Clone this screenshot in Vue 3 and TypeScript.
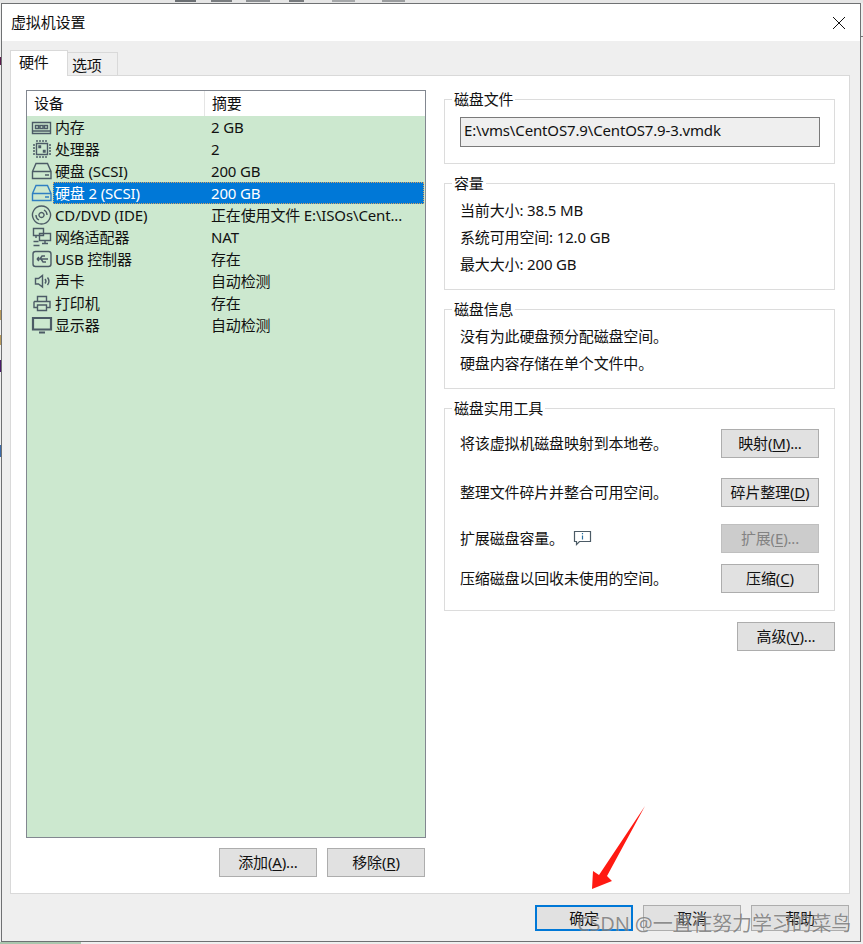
<script setup lang="ts">
interface Device {
  name: string
  summary: string
  icon: string
  fill?: string
  selected?: boolean
}

const devices: Device[] = [
  { name: '内存', summary: '2 GB', icon: 'M1.5 6.5H19.5V17.5H1.5ZM4.5 9.5H7.5V12.5H4.5ZM9 9.5H12V12.5H9ZM13.5 9.5H16.5V12.5H13.5ZM1.5 15H19.5' },
  { name: '处理器', summary: '2', icon: 'M5.5 5.5H16.5V16.5H5.5ZM6 2V4M9 2V4M12 2V4M15 2V4M6 18V20M9 18V20M12 18V20M15 18V20M2 7H4M2 10H4M2 13H4M2 16H4M18 7H20M18 10H20M18 13H20M18 16H20M8 8H9.5V9.5H8ZM12.5 12.5H14V14H12.5Z' },
  { name: '硬盘 (SCSI)', summary: '200 GB', icon: 'M1.5 11.5L5 3.5H16.5L20 11.5V18.5H1.5ZM2 11.5H19.5M14 15H18' },
  { name: '硬盘 2 (SCSI)', summary: '200 GB', icon: 'M1.5 11.5L5 3.5H16.5L20 11.5V18.5H1.5ZM2 11.5H19.5M14 15H18', selected: true },
  { name: 'CD/DVD (IDE)', summary: '正在使用文件 E:\\ISOs\\Cent...', icon: 'M10.5 2a9 9 0 1 0 .01 0ZM10.5 8.5a2.5 2.5 0 1 0 .01 0ZM5 11a5.5 5.5 0 0 0 3 5M16 11a5.5 5.5 0 0 0-3-5' },
  { name: '网络适配器', summary: 'NAT', icon: 'M2.5 2.5H12.5V9.5H2.5ZM8.5 7.5H19.5V14.5H8.5ZM14 14.5V17M11 17.5H17M5 10V12M2.5 15.5H7.5M2.5 19.5H8.5' },
  { name: 'USB 控制器', summary: '存在', icon: 'M4.5 3.5H17.5A2.5 2.5 0 0 1 20 6V16A2.5 2.5 0 0 1 17.5 18.5H4.5A2.5 2.5 0 0 1 2 16V6A2.5 2.5 0 0 1 4.5 3.5ZM6 11H17M6 11L8 9M6 11L8 13M9 11L11 8H14M10 11L12 14H15' },
  { name: '声卡', summary: '自动检测', icon: 'M4.5 8.5H7.5L11.5 5.5V17L7.5 14H4.5ZM14 9a3.5 3.5 0 0 1 0 4.5M16.5 7.5a6 6 0 0 1 0 7.5' },
  { name: '打印机', summary: '存在', icon: 'M6.5 9V4.5H15.5V9M3 9.5H19V15.5H15.5M6.5 15.5H3V9.5M6.5 13H15.5V18.5H6.5Z' },
  { name: '显示器', summary: '自动检测', icon: 'M2 4H20V15.5H2ZM8 18.5H14', fill: 'wide' }
]

interface Fragment {
  x: number
  y: number
  w: number
  h: number
  c: string
}

const fragments: Fragment[] = [
  { x: 0, y: 0, w: 863, h: 3, c: '#e6e6e6' },
  { x: 175, y: 0, w: 21, h: 2, c: '#6b6f73' },
  { x: 211, y: 0, w: 21, h: 2, c: '#7a7d80' },
  { x: 246, y: 0, w: 24, h: 2, c: '#8c8f92' },
  { x: 289, y: 0, w: 15, h: 2, c: '#777a7d' },
  { x: 332, y: 0, w: 23, h: 2, c: '#a5a7a9' },
  { x: 382, y: 0, w: 23, h: 2, c: '#9a9c9e' },
  { x: 0, y: 57, w: 1, h: 8, c: '#5d1b4e' },
  { x: 0, y: 310, w: 1, h: 10, c: '#b99a5a' },
  { x: 0, y: 335, w: 1, h: 10, c: '#b99a5a' },
  { x: 0, y: 360, w: 1, h: 12, c: '#4a1a6a' },
  { x: 0, y: 445, w: 1, h: 12, c: '#3b6aa8' },
  { x: 0, y: 942, w: 81, h: 2, c: '#a9c6ad' },
  { x: 861, y: 36, w: 2, h: 1, c: '#777777' }
]
</script>

<template>
  <div class="page">
    <i
      v-for="(f, i) in fragments"
      :key="i"
      class="fragment"
      :style="{ left: f.x + 'px', top: f.y + 'px', width: f.w + 'px', height: f.h + 'px', background: f.c }"
    ></i>

    <div class="window">
      <header class="titlebar">
        <span>虚拟机设置</span>
        <svg class="close" width="12" height="12" viewBox="0 0 12 12">
          <path d="M0 0L12 12M12 0L0 12" stroke="#111" stroke-width="1" fill="none" />
        </svg>
      </header>

      <div class="body">
        <nav class="tabs">
          <div class="tab active">硬件</div>
          <div class="tab">选项</div>
        </nav>

        <main class="panel">
          <section class="left">
            <div class="list">
              <div class="list-head">
                <div class="col-a">设备</div>
                <div class="col-b">摘要</div>
              </div>
              <div v-for="d in devices" :key="d.name" class="row" :class="{ selected: d.selected }">
                <svg class="dev-icon" width="22" height="22" viewBox="0 0 22 22">
                  <path
                    :d="d.icon"
                    fill="none"
                    :stroke="d.selected ? '#2f7fc2' : '#4c5b66'"
                    :stroke-width="d.fill ? 2.2 : 1.4"
                  />
                </svg>
                <div class="row-text">
                  <span class="row-name">{{ d.name }}</span>
                  <span class="row-summary">{{ d.summary }}</span>
                </div>
              </div>
            </div>
            <div class="list-actions">
              <button class="btn">添加(<u>A</u>)...</button>
              <button class="btn">移除(<u>R</u>)</button>
            </div>
          </section>

          <section class="right">
            <fieldset class="group g1">
              <legend>磁盘文件</legend>
              <div class="filebox">E:\vms\CentOS7.9\CentOS7.9-3.vmdk</div>
            </fieldset>

            <fieldset class="group g2">
              <legend>容量</legend>
              <p>当前大小: 38.5 MB</p>
              <p>系统可用空间: 12.0 GB</p>
              <p>最大大小: 200 GB</p>
            </fieldset>

            <fieldset class="group g3">
              <legend>磁盘信息</legend>
              <p>没有为此硬盘预分配磁盘空间。</p>
              <p>硬盘内容存储在单个文件中。</p>
            </fieldset>

            <fieldset class="group g4">
              <legend>磁盘实用工具</legend>
              <div class="tool">
                <span class="tool-label">将该虚拟机磁盘映射到本地卷。</span>
                <button class="btn">映射(<u>M</u>)...</button>
              </div>
              <div class="tool">
                <span class="tool-label">整理文件碎片并整合可用空间。</span>
                <button class="btn">碎片整理(<u>D</u>)</button>
              </div>
              <div class="tool">
                <span class="tool-label with-info">
                  扩展磁盘容量。
                  <svg class="info" width="19" height="16" viewBox="0 0 19 16">
                    <path d="M1.5 1.5H17.5V11.5H6.5L3.5 14.5V11.5H1.5Z" fill="none" stroke="#4c5b66" stroke-width="1.2" />
                    <path d="M9.5 3V4.2M9.5 5.5V9.5" fill="none" stroke="#2a6f9e" stroke-width="1.2" />
                  </svg>
                </span>
                <button class="btn" disabled>扩展(<u>E</u>)...</button>
              </div>
              <div class="tool">
                <span class="tool-label">压缩磁盘以回收未使用的空间。</span>
                <button class="btn">压缩(<u>C</u>)</button>
              </div>
            </fieldset>

            <div class="advanced">
              <button class="btn">高级(<u>V</u>)...</button>
            </div>
          </section>
        </main>

        <footer class="footer">
          <button class="btn foot default">确定</button>
          <button class="btn foot">取消</button>
          <button class="btn foot">帮助</button>
        </footer>
      </div>

      <svg class="arrow" width="60" height="88" viewBox="0 0 60 88">
        <path d="M54 1L16 71L21 76L1 84L2 66L8 70Z" fill="#ff1a12" />
      </svg>
      <div class="watermark">CSDN @一直在努力学习的菜鸟</div>
    </div>
  </div>
</template>

<style>
html,
body {
  margin: 0;
  background: #efefef;
}
</style>

<style scoped>
.page {
  position: relative;
  width: 863px;
  height: 944px;
  overflow: hidden;
  padding: 3px 0 0 1px;
  box-sizing: border-box;
  font-family: "Noto Sans", "Noto Sans CJK SC", sans-serif;
  font-size: 15px;
  letter-spacing: -0.15px;
  color: #111;
}
.fragment {
  position: absolute;
  display: block;
}
.window {
  position: relative;
  width: 860px;
  height: 939px;
  box-sizing: border-box;
  border: 1px solid #6f7173;
  background: #efefef;
  display: flex;
  flex-direction: column;
}
.titlebar {
  height: 37px;
  flex: none;
  background: #fff;
  display: flex;
  align-items: center;
  justify-content: space-between;
  padding: 0 15px 2px 9px;
  box-sizing: border-box;
}
.close {
  display: block;
  margin-top: 2px;
}
.body {
  flex: 1;
  padding: 9px 10px 0 8px;
  display: flex;
  flex-direction: column;
}
.tabs {
  display: flex;
  align-items: flex-end;
  height: 25px;
  position: relative;
  z-index: 1;
}
.tab {
  width: 50px;
  height: 23px;
  box-sizing: border-box;
  border: 1px solid #d9d9d9;
  border-bottom: none;
  border-left: none;
  padding-left: 4px;
  line-height: 24px;
  background: #efefef;
}
.tab.active {
  width: 58px;
  height: 26px;
  margin-bottom: -1px;
  background: #fff;
  border-left: 1px solid #d9d9d9;
  padding-left: 8px;
  line-height: 22px;
}
.panel {
  height: 819px;
  box-sizing: border-box;
  background: #fff;
  border: 1px solid #d9d9d9;
  padding: 13px 13px 0 15px;
  display: flex;
  gap: 18px;
}
.left {
  width: 400px;
  flex: none;
}
.list {
  margin-top: 1px;
  height: 748px;
  box-sizing: border-box;
  border: 1px solid #828790;
  background: #cce8cf;
}
.list-head {
  height: 25px;
  display: flex;
  background: #fff;
  line-height: 25px;
}
.col-a {
  width: 170px;
  padding-left: 7px;
  border-right: 1px solid #e5e5e5;
}
.col-b {
  padding-left: 7px;
}
.row {
  height: 22px;
  display: flex;
  padding-left: 4px;
  padding-right: 1px;
}
.dev-icon {
  flex: none;
  display: block;
}
.row-text {
  flex: 1;
  display: flex;
  line-height: 22px;
  padding-left: 2px;
  box-sizing: border-box;
}
.row-name {
  width: 156px;
  flex: none;
  white-space: nowrap;
}
.row-summary {
  white-space: nowrap;
}
.row.selected .row-text {
  background: #0078d7;
  color: #fff;
  outline: 1px dotted #d9a35f;
  outline-offset: -1px;
}
.list-actions {
  display: flex;
  justify-content: flex-end;
  gap: 10px;
  margin-top: 10px;
  padding-right: 1px;
}
.btn {
  width: 98px;
  height: 29px;
  box-sizing: border-box;
  border: 1px solid #adadad;
  background: #e1e1e1;
  color: #111;
  font: inherit;
  letter-spacing: inherit;
  padding: 0;
  white-space: nowrap;
  line-height: 1;
}
.btn u {
  text-underline-offset: 2px;
}
.btn:disabled {
  background: #cccccc;
  border-color: #bfbfbf;
  color: #838383;
}
.right {
  width: 391px;
  flex: none;
  display: flex;
  flex-direction: column;
  gap: 9px;
}
.group {
  margin: 0;
  border: 1px solid #dcdcdc;
  padding: 0 15px;
  min-width: 0;
  box-sizing: border-box;
}
.group legend {
  margin-left: -8px;
  padding: 0 2px;
  line-height: 20px;
  height: 20px;
}
.group p {
  margin: 0;
  height: 27px;
  line-height: 27px;
}
.g1 {
  height: 75px;
}
.g2 {
  height: 117px;
  padding-top: 4px;
}
.g3 {
  height: 90px;
  padding-top: 4px;
}
.g4 {
  height: 213px;
}
.filebox {
  margin-top: 8px;
  margin-right: -1px;
  height: 30px;
  box-sizing: border-box;
  border: 1px solid #7a7a7a;
  background: #efefef;
  padding-left: 3px;
  line-height: 24px;
}
.tool {
  display: flex;
  justify-content: space-between;
  align-items: center;
  height: 29px;
}
.tool-label {
  padding-bottom: 3px;
}
.tool:nth-of-type(1) {
  margin-top: 11px;
}
.tool:nth-of-type(2) {
  margin-top: 20px;
}
.tool:nth-of-type(3) {
  margin-top: 17px;
}
.tool:nth-of-type(4) {
  margin-top: 11px;
}
.with-info {
  display: flex;
  align-items: center;
  gap: 9px;
}
.info {
  display: block;
  margin-top: 2px;
}
.advanced {
  margin-top: 2px;
  display: flex;
  justify-content: flex-end;
}
.footer {
  display: flex;
  justify-content: flex-end;
  gap: 10px;
  margin-top: 11px;
  padding-right: 1px;
}
.foot {
  height: 26px;
}
.foot.default {
  border: 2px solid #0078d7;
}
.arrow {
  position: absolute;
  left: 589px;
  top: 801px;
  pointer-events: none;
}
.watermark {
  position: absolute;
  left: 575px;
  top: 907px;
  font-size: 20px;
  line-height: 26px;
  color: rgba(70, 70, 70, 0.6);
  text-shadow: 0 0 1px rgba(255, 255, 255, 0.7);
  white-space: nowrap;
  pointer-events: none;
}
</style>
